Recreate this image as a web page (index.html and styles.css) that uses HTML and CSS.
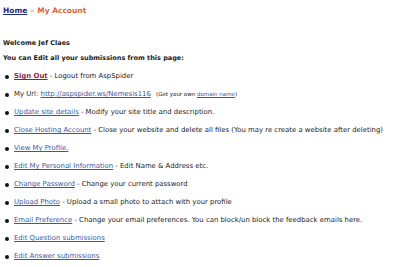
FILE: index.html
```html
<!DOCTYPE html>
<html>
<head>
  <title>My Account</title>
  <link rel="stylesheet" href="styles.css">
</head>
<body>
  <div class="crumbs">
    <a href="#" class="home">Home</a> <span class="sep">&raquo;</span> <span class="current">My Account</span>
  </div>

  <div class="content">
    <p class="welcome">Welcome Jef Claes</p>
    <p class="intro">You can Edit all your submissions from this page:</p>

    <ul class="actions">
      <li><a href="#" class="signout">Sign Out</a> - Logout from AspSpider</li>
      <li>My Url: <a href="#">http://aspspider.ws/Nemesis116</a> <span class="small">(Get your own <a href="#">domain name</a>)</span></li>
      <li><a href="#">Update site details</a> - Modify your site title and description.</li>
      <li><a href="#">Close Hosting Account</a> - Close your website and delete all files (You may re create a website after deleting)</li>
      <li><a href="#">View My Profile.</a></li>
      <li><a href="#">Edit My Personal Information</a> - Edit Name &amp; Address etc.</li>
      <li><a href="#">Change Password</a> - Change your current password</li>
      <li><a href="#">Upload Photo</a> - Upload a small photo to attach with your profile</li>
      <li><a href="#">Email Preference</a> - Change your email preferences. You can block/un block the feedback emails here.</li>
      <li><a href="#">Edit Question submissions</a></li>
      <li><a href="#">Edit Answer submissions</a></li>
    </ul>
  </div>
</body>
</html>
```

FILE: styles.css
```css
body {
  font-family: "DejaVu Sans", Verdana, sans-serif;
  font-size: 6.9px;
  margin: 0;
  padding: 5px 3px;
  background-color: white;
  color: #1a1a1a;
}
a {
  color: #3558a8;
}
.crumbs {
  font-weight: bold;
  font-size: 7.5px;
  line-height: 12px;
}
.crumbs .home {
  color: #1c2a80;
}
.crumbs .sep {
  color: #d9a080;
  font-weight: normal;
}
.crumbs .current {
  color: #e0642a;
}
.content {
  margin-top: 19px;
}
.welcome,
.intro {
  font-weight: bold;
  font-size: 6.5px;
  margin: 0;
  line-height: 14px;
}
.intro {
  margin-top: 1px;
}
.actions {
  list-style: none;
  margin: 2px 0 0;
  padding: 0;
}
.actions li {
  position: relative;
  padding-left: 11px;
  line-height: 18px;
}
.actions li::before {
  content: "";
  position: absolute;
  left: 2px;
  top: 8px;
  width: 4px;
  height: 4px;
  border-radius: 50%;
  background-color: #111;
}
.actions .signout {
  color: #8a1f4e;
  font-weight: bold;
}
.small {
  font-size: 5.5px;
  margin-left: 3px;
}
```
